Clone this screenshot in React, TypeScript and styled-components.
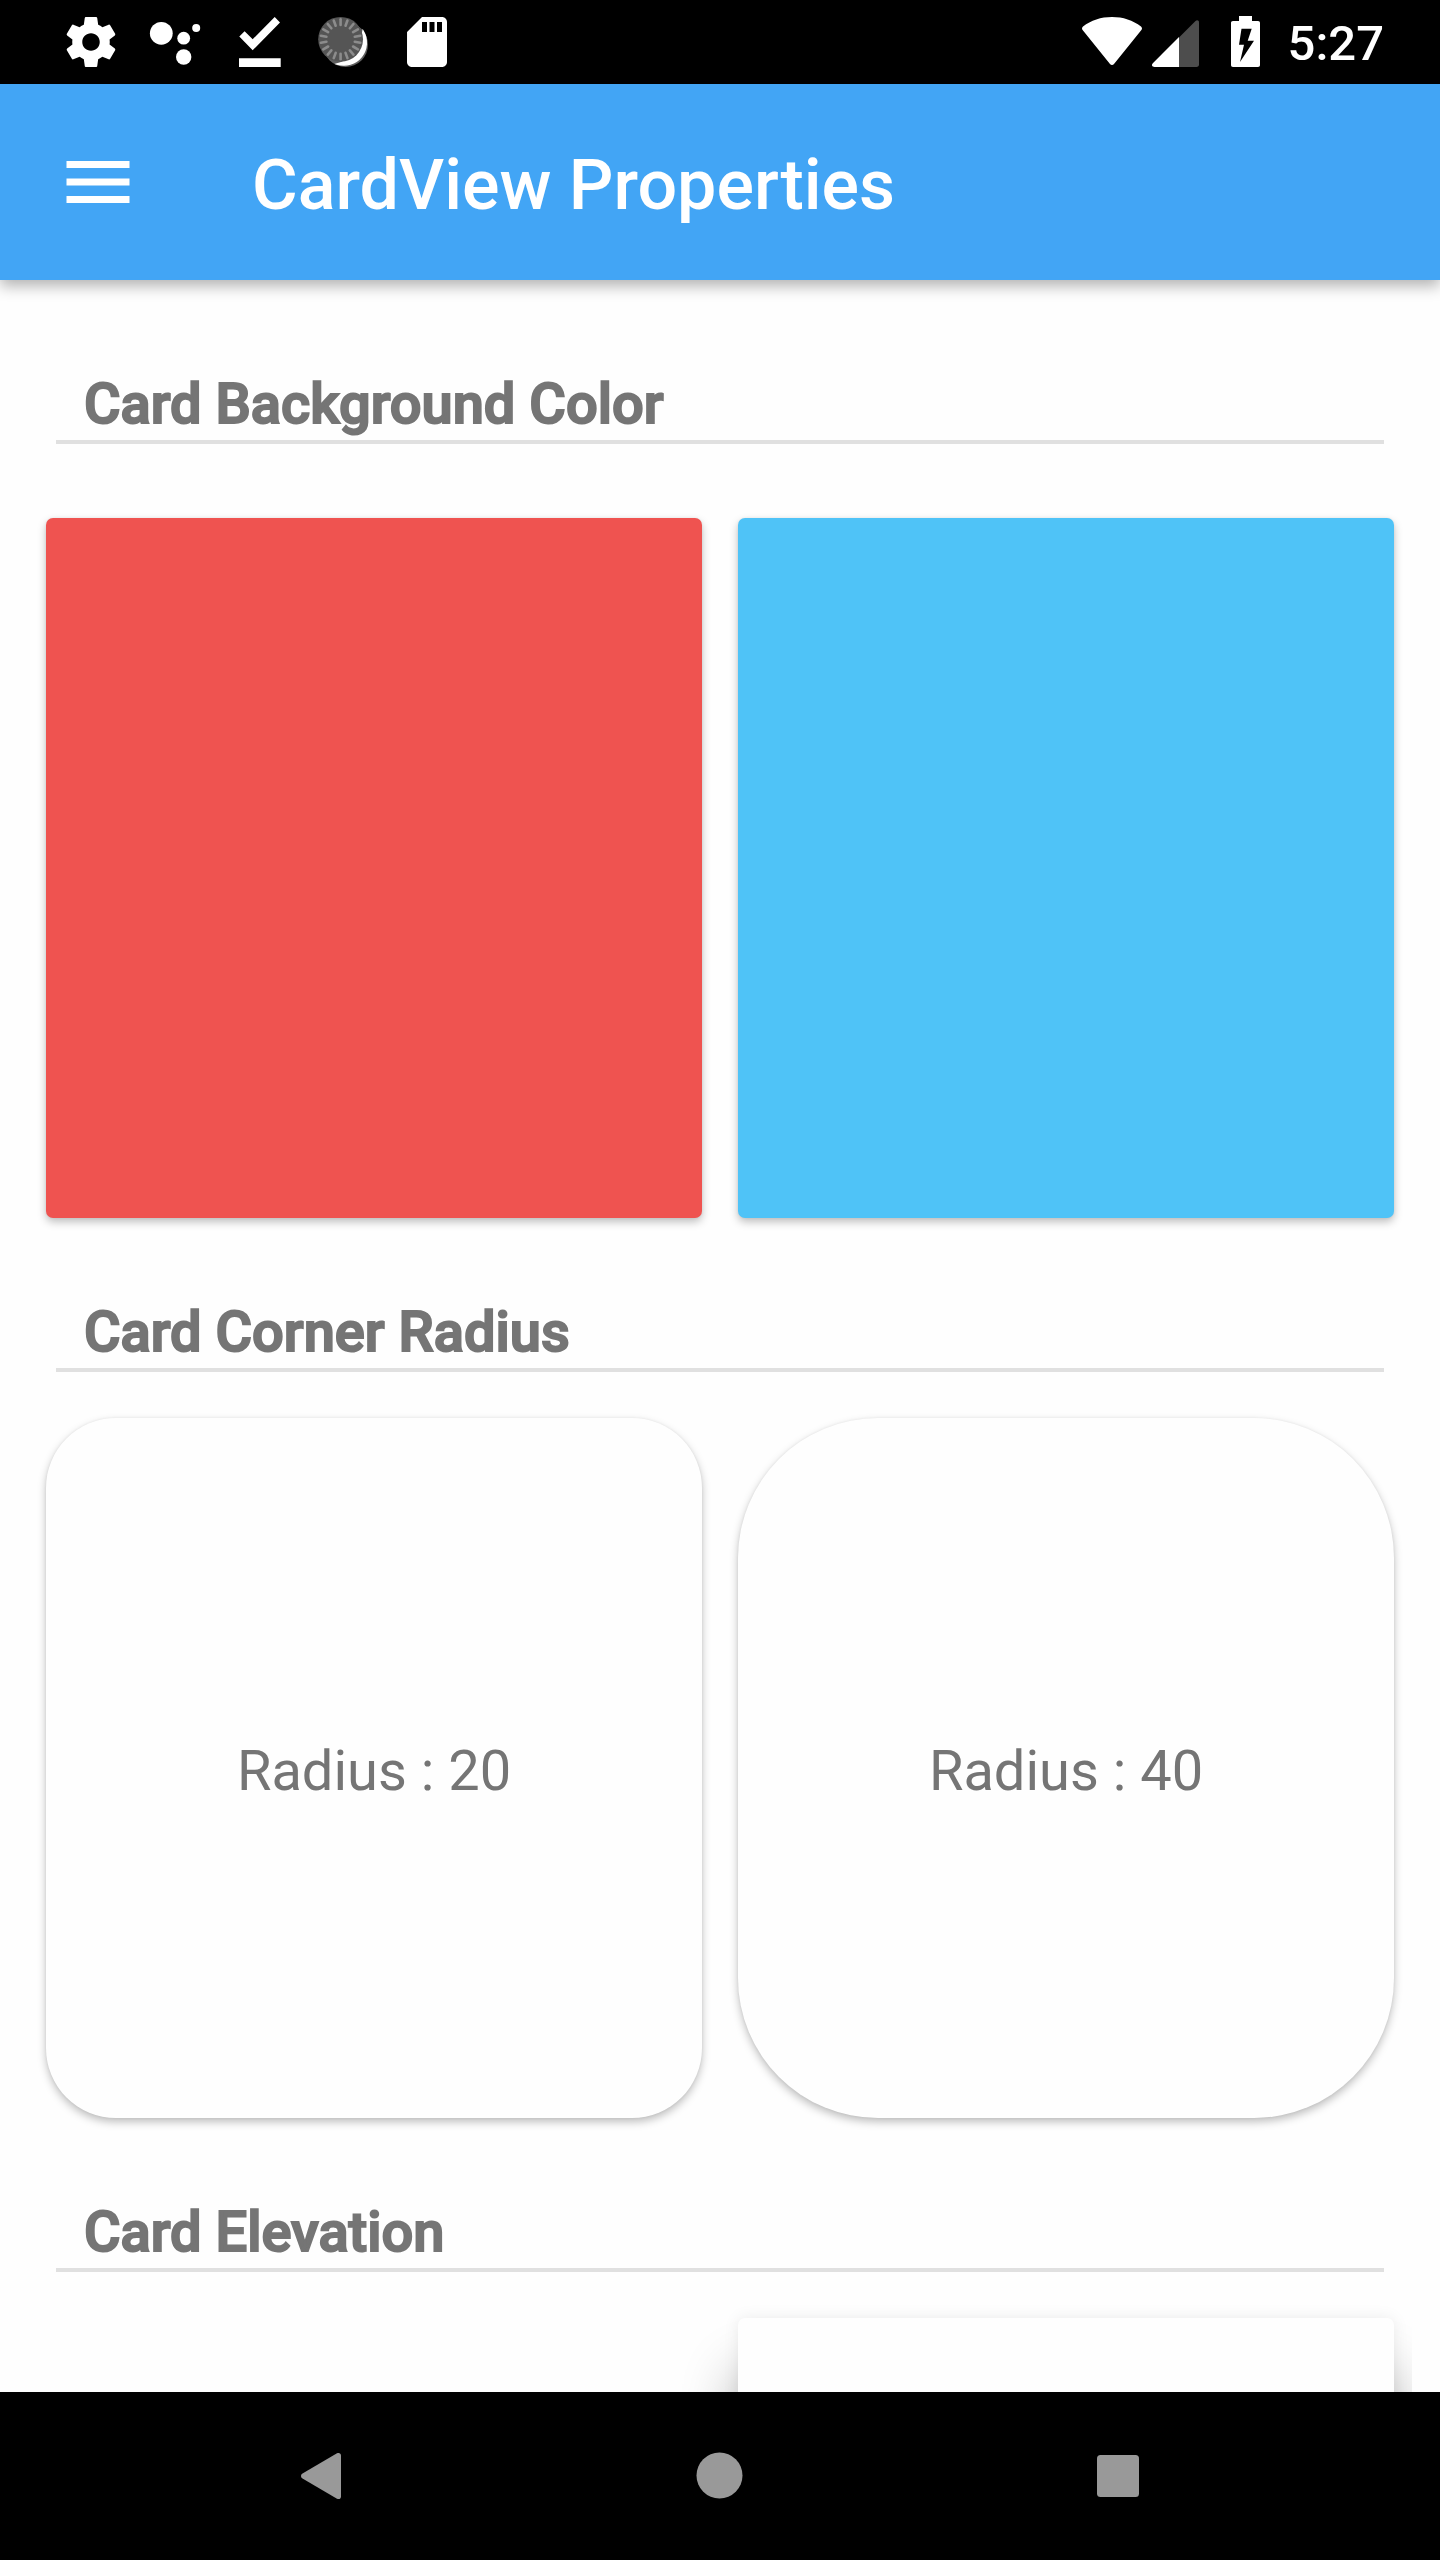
import React from "react";
import styled, { createGlobalStyle } from "styled-components";

const GlobalStyle = createGlobalStyle`
  *, *::before, *::after { box-sizing: border-box; }
  body { margin: 0; background: #fefefe; font-family: Roboto, "Liberation Sans", sans-serif; }
  h1, h2, p { margin: 0; }
  button { border: 0; padding: 0; background: none; font: inherit; color: inherit; cursor: pointer; }
  svg { display: block; flex: none; }
`;

const Screen = styled.div`
  display: flex;
  flex-direction: column;
  height: 100vh;
  overflow: hidden;
  background: #fefefe;
`;

const StatusBar = styled.div`
  flex: none;
  display: flex;
  align-items: center;
  justify-content: space-between;
  height: 84px;
  padding: 0 56px 0 61px;
  background: #000;
  color: #fff;
`;

const IconRow = styled.div<{ $gap: number }>`
  display: flex;
  align-items: center;
  gap: ${(p) => p.$gap}px;
`;

const Clock = styled.time`
  margin-left: 14px;
  padding-top: 4px;
  font-size: 49px;
  font-weight: 500;
  line-height: 60px;
`;

const Toolbar = styled.header`
  flex: none;
  position: relative;
  z-index: 1;
  display: flex;
  align-items: center;
  gap: 112px;
  height: 196px;
  padding: 0 56px;
  background: #42a5f5;
  color: #fff;
  box-shadow: 0 6px 14px rgba(0, 0, 0, 0.3);
`;

const MenuButton = styled.button`
  width: 84px;
  height: 84px;
`;

const Title = styled.h1`
  padding-top: 6px;
  font-size: 70px;
  font-weight: 500;
  line-height: 84px;
`;

const Content = styled.main`
  flex: 1;
  min-height: 0;
  margin: 0 28px;
  padding-top: 10px;
  overflow: hidden;
`;

const Section = styled.section`
  padding-top: 81px;
`;

const SectionTitle = styled.h2`
  margin: 0 28px;
  padding: 0 28px 3px;
  border-bottom: 4px solid #e0e0e0;
  color: #757575;
  font-size: 56px;
  font-weight: 500;
  line-height: 66px;
  -webkit-text-stroke: 2px #757575;
`;

const CardRow = styled.div<{ $top: number }>`
  display: grid;
  grid-template-columns: 1fr 1fr;
  gap: 36px;
  padding: ${(p) => p.$top}px 18px 0;
`;

const shadows = {
  none: "none",
  low: "0 4px 8px rgba(0, 0, 0, 0.25), 0 0 3px rgba(0, 0, 0, 0.06)",
  high: "0 56px 56px rgba(0, 0, 0, 0.32), 0 0 16px rgba(0, 0, 0, 0.08)",
};

const Card = styled.article<{ $color?: string; $radius?: number; $elevation?: keyof typeof shadows }>`
  display: flex;
  align-items: center;
  justify-content: center;
  height: 700px;
  border-radius: ${(p) => p.$radius ?? 7}px;
  background: ${(p) => p.$color ?? "#fefefe"};
  box-shadow: ${(p) => shadows[p.$elevation ?? "low"]};
`;

const CardLabel = styled.p`
  padding-top: 6px;
  color: #757575;
  font-size: 56px;
  line-height: 66px;
`;

const NavBar = styled.nav`
  flex: none;
  display: flex;
  height: 168px;
  padding: 0 123px;
  background: #000;
`;

const NavButton = styled.button`
  flex: 1;
  display: flex;
  align-items: center;
  justify-content: center;
`;

const SettingsIcon = () => (
  <svg width="60" height="60" viewBox="0 0 24 24" fill="#fff" aria-hidden="true">
    <path d="M19.43 12.98c.04-.32.07-.64.07-.98s-.03-.66-.07-.98l2.11-1.65c.19-.15.24-.42.12-.64l-2-3.46c-.12-.22-.39-.3-.61-.22l-2.49 1c-.52-.4-1.08-.73-1.69-.98l-.38-2.65A.488.488 0 0 0 14 2h-4c-.25 0-.46.18-.49.42l-.38 2.65c-.61.25-1.17.59-1.69.98l-2.49-1c-.23-.09-.49 0-.61.22l-2 3.46c-.13.22-.07.49.12.64l2.11 1.65c-.04.32-.07.65-.07.98s.03.66.07.98l-2.11 1.65c-.19.15-.24.42-.12.64l2 3.46c.12.22.39.3.61.22l2.49-1c.52.4 1.08.73 1.69.98l.38 2.65c.03.24.24.42.49.42h4c.25 0 .46-.18.49-.42l.38-2.65c.61-.25 1.17-.59 1.69-.98l2.49 1c.23.09.49 0 .61-.22l2-3.46c.12-.22.07-.49-.12-.64l-2.11-1.65zM12 15.5c-1.93 0-3.5-1.57-3.5-3.5s1.57-3.5 3.5-3.5 3.5 1.57 3.5 3.5-1.57 3.5-3.5 3.5z" />
  </svg>
);

const AssistantIcon = () => (
  <svg width="60" height="60" viewBox="0 0 60 60" fill="#fff" aria-hidden="true">
    <circle cx="16.3" cy="21.3" r="11.4" />
    <circle cx="38.7" cy="26.2" r="6.4" />
    <circle cx="38.7" cy="45" r="7.7" />
    <circle cx="51.2" cy="16" r="4" />
  </svg>
);

const DoneIcon = () => (
  <svg width="60" height="60" viewBox="0 0 60 60" fill="#fff" aria-hidden="true">
    <path d="M10.3 24.5 15.6 19.2 23.7 27.2 45.7 5 51 10.4 23.7 38.2zM10 46.3h41.7v8.7H10z" />
  </svg>
);

const ticks = Array.from({ length: 18 }, (_, i) => i * 20);

const SpinnerIcon = () => (
  <svg width="60" height="60" viewBox="0 0 60 60" aria-hidden="true">
    <circle cx="32.6" cy="32.6" r="22.4" fill="#606060" />
    <path d="M50 19A22.400 22.400 0 0 1 24 52Q46 46 50 19z" fill="#fff" stroke="#fff" strokeWidth="1.5" />
    <circle cx="27.6" cy="27.3" r="22.4" fill="#555" />
    {ticks.map((a) => (
      <path
        key={a}
        d="M27.6 7.3v5.6"
        stroke="#8c8c8c"
        strokeWidth="2.6"
        strokeLinecap="round"
        transform={`rotate(${a} 27.6 27.3)`}
      />
    ))}
  </svg>
);

const SdCardIcon = () => (
  <svg width="60" height="60" viewBox="0 0 24 24" fill="#fff" aria-hidden="true">
    <path d="M18 2h-8L4.02 8 4 20c0 1.100.9 2 2 2h12c1.100 0 2-.9 2-2V4c0-1.100-.9-2-2-2zm-6 6h-2V4h2v4zm3 0h-2V4h2v4zm3 0h-2V4h2v4z" />
  </svg>
);

const WifiIcon = () => (
  <svg width="60" height="60" viewBox="0 0 60 60" fill="#fff" aria-hidden="true">
    <path d="M1 14.500C9 8.300 19 5 30 5s21 3.300 29 9.500c1.200 1 1.300 2.400.4 3.500L32 52c-1.100 1.400-2.900 1.400-4 0L.6 18c-.9-1.100-.8-2.500.4-3.500z" />
  </svg>
);

const SignalIcon = () => (
  <svg width="60" height="60" viewBox="0 0 60 60" aria-hidden="true">
    <path d="M33 25.500 49.500 9c1.500-1.500 3.500-.8 3.500 1.500V52.500c0 1.500-1 2.500-2.500 2.500H33z" fill="#4d4d4d" />
    <path d="M33 25v30H8.500c-2.500 0-3.300-2-1.700-3.700z" fill="#fff" />
  </svg>
);

const BatteryIcon = () => (
  <svg width="60" height="60" viewBox="0 0 60 60" aria-hidden="true">
    <path d="M29 4h13v5h6c1.300 0 2 .7 2 2v42c0 1.300-.7 2-2 2H23c-1.300 0-2-.7-2-2V11c0-1.300.7-2 2-2h6z" fill="#fff" />
    <path d="M31.500 16.700h10.200L37.700 28.700h6.300L30 50l4-17.300h-5z" fill="#000" />
  </svg>
);

const MenuIcon = () => (
  <svg width="84" height="84" viewBox="0 0 24 24" fill="#fff" aria-hidden="true">
    <path d="M3 18h18v-2H3v2zm0-5h18v-2H3v2zm0-7v2h18V6H3z" />
  </svg>
);

const BackIcon = () => (
  <svg width="42" height="48" viewBox="0 0 42 48" fill="#999" aria-hidden="true">
    <path d="M1.500 21.500 36 1.300c2-1 4 0 4 2.200v41c0 2.200-2 3.200-4 2.200L1.500 26.500c-2-1.200-2-3.800 0-5z" />
  </svg>
);

const HomeIcon = () => (
  <svg width="48" height="48" viewBox="0 0 48 48" fill="#999" aria-hidden="true">
    <circle cx="23.5" cy="23.5" r="23" />
  </svg>
);

const RecentsIcon = () => (
  <svg width="42" height="42" viewBox="0 0 42 42" fill="#999" aria-hidden="true">
    <rect width="42" height="42" rx="3.500" />
  </svg>
);

export default function App() {
  return (
    <>
      <GlobalStyle />
      <Screen>
        <StatusBar>
          <IconRow $gap={24}>
            <SettingsIcon />
            <AssistantIcon />
            <DoneIcon />
            <SpinnerIcon />
            <SdCardIcon />
          </IconRow>
          <IconRow $gap={4}>
            <WifiIcon />
            <SignalIcon />
            <BatteryIcon />
            <Clock>5:27</Clock>
          </IconRow>
        </StatusBar>
        <Toolbar>
          <MenuButton aria-label="Open navigation menu">
            <MenuIcon />
          </MenuButton>
          <Title>CardView Properties</Title>
        </Toolbar>
        <Content>
          <Section>
            <SectionTitle>Card Background Color</SectionTitle>
            <CardRow $top={74}>
              <Card $color="#ef5350" />
              <Card $color="#4fc3f7" />
            </CardRow>
          </Section>
          <Section>
            <SectionTitle>Card Corner Radius</SectionTitle>
            <CardRow $top={46}>
              <Card $radius={70}>
                <CardLabel>Radius : 20</CardLabel>
              </Card>
              <Card $radius={140}>
                <CardLabel>Radius : 40</CardLabel>
              </Card>
            </CardRow>
          </Section>
          <Section>
            <SectionTitle>Card Elevation</SectionTitle>
            <CardRow $top={46}>
              <Card $elevation="none" />
              <Card $elevation="high" />
            </CardRow>
          </Section>
        </Content>
        <NavBar>
          <NavButton aria-label="Back">
            <BackIcon />
          </NavButton>
          <NavButton aria-label="Home">
            <HomeIcon />
          </NavButton>
          <NavButton aria-label="Recent apps">
            <RecentsIcon />
          </NavButton>
        </NavBar>
      </Screen>
    </>
  );
}
